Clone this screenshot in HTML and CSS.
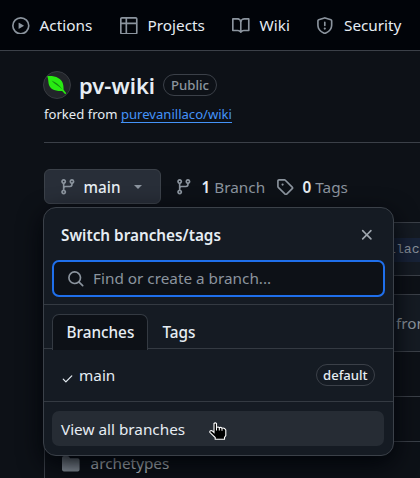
FILE: index.html
```html
<!DOCTYPE html>
<html lang="en">
<head>
<meta charset="utf-8">
<title>pv-wiki</title>
<link rel="stylesheet" href="styles.css">
</head>
<body>
<svg width="0" height="0" class="defs">
  <symbol id="branch" viewBox="0 0 16 16"><path d="M9.5 3.25a2.25 2.25 0 1 1 3 2.122V6A2.5 2.5 0 0 1 10 8.5H6a1 1 0 0 0-1 1v1.128a2.251 2.251 0 1 1-1.5 0V5.372a2.25 2.25 0 1 1 1.5 0v1.836A2.493 2.493 0 0 1 6 7h4a1 1 0 0 0 1-1v-.628A2.25 2.25 0 0 1 9.5 3.25Zm-6 0a.75.75 0 1 0 1.5 0 .75.75 0 0 0-1.5 0Zm8.25-.75a.75.75 0 1 0 0 1.5.75.75 0 0 0 0-1.5ZM4.25 12a.75.75 0 1 0 0 1.5.75.75 0 0 0 0-1.5Z"/></symbol>
</svg>
<nav class="nav">
  <a class="nav-item actions"><svg class="icon" viewBox="0 0 16 16"><path d="M8 0a8 8 0 1 1 0 16A8 8 0 0 1 8 0ZM1.5 8a6.500 6.500 0 1 0 13 0 6.500 6.500 0 0 0-13 0Zm4.879-2.773 4.264 2.559a.25.25 0 0 1 0 .428l-4.264 2.559A.25.25 0 0 1 6 10.559V5.442a.25.25 0 0 1 .379-.215Z"/></svg><span>Actions</span></a>
  <a class="nav-item projects"><svg class="icon" viewBox="0 0 16 16"><path d="M0 1.750C0 .784.784 0 1.750 0h12.500C15.216 0 16 .784 16 1.750v12.500A1.750 1.750 0 0 1 14.250 16H1.750A1.750 1.750 0 0 1 0 14.250ZM6.500 6.500v8h7.750a.25.25 0 0 0 .25-.25V6.500Zm8-1.500V1.750a.25.25 0 0 0-.25-.25H6.500V5Zm-13 1.500v7.750c0 .138.112.25.25.25H5v-8ZM5 5V1.500H1.750a.25.25 0 0 0-.25.25V5Z"/></svg><span>Projects</span></a>
  <a class="nav-item wiki"><svg class="icon" viewBox="0 0 16 16"><path d="M0 1.750A.75.75 0 0 1 .75 1h4.253c1.227 0 2.317.59 3 1.501A3.743 3.743 0 0 1 11.006 1h4.245a.75.75 0 0 1 .75.75v10.500a.75.75 0 0 1-.75.75h-4.507a2.250 2.250 0 0 0-1.591.659l-.622.621a.75.75 0 0 1-1.060 0l-.622-.621A2.250 2.250 0 0 0 5.258 13H.75a.75.75 0 0 1-.75-.75Zm7.251 10.324.004-5.073-.002-2.253A2.250 2.250 0 0 0 5.003 2.500H1.500v9h3.757a3.750 3.750 0 0 1 1.994.574ZM8.755 4.750l-.004 7.322a3.752 3.752 0 0 1 1.992-.572H14.500v-9h-3.495a2.250 2.250 0 0 0-2.250 2.250Z"/></svg><span>Wiki</span></a>
  <a class="nav-item security"><svg class="icon" viewBox="0 0 16 16"><path d="M7.467.133a1.748 1.748 0 0 1 1.066 0l5.250 1.680A1.750 1.750 0 0 1 15 3.480V7c0 1.566-.32 3.182-1.303 4.682-.983 1.498-2.585 2.813-5.032 3.855a1.697 1.697 0 0 1-1.330 0c-2.447-1.042-4.049-2.357-5.032-3.855C1.320 10.182 1 8.566 1 7V3.480a1.750 1.750 0 0 1 1.217-1.667Zm.61 1.429a.25.25 0 0 0-.153 0l-5.250 1.680a.25.25 0 0 0-.174.238V7c0 1.358.275 2.666 1.057 3.860.784 1.194 2.121 2.340 4.366 3.297a.196.196 0 0 0 .154 0c2.245-.956 3.582-2.104 4.366-3.298C13.225 9.666 13.500 8.360 13.500 7V3.480a.251.251 0 0 0-.174-.237ZM8.750 4.750v3a.75.75 0 0 1-1.500 0v-3a.75.75 0 0 1 1.500 0ZM9 10.500a1 1 0 1 1-2 0 1 1 0 0 1 2 0Z"/></svg><span>Security</span></a>
</nav>

<main class="page">
  <header class="repo">
    <div class="repo-title">
      <svg class="avatar" viewBox="0 0 28 28"><circle cx="14" cy="14" r="13.500" fill="#22252a" stroke="#373b41"/><path d="M4.200 5.200C8 4.900 12 5.200 15.500 7.200 19 9.300 20.800 12 20.600 18.700L23.300 22.300 22.200 23.300 19.200 20C11.500 20.300 6.500 18 5.600 12.500 5.200 9.800 5.300 7.500 4.200 5.200Z" fill="#28eb12"/><path d="M8.500 9.500c4.500 1.700 7.500 4.200 11 8.900C15.500 15 11.500 13 8.500 9.500Z" fill="#158d10"/></svg>
      <h1>pv-wiki</h1>
      <span class="label">Public</span>
    </div>
    <p class="fork">forked from <a>purevanillaco/wiki</a></p>
  </header>

  <div class="toolbar">
    <div class="branch-picker">
      <button class="branch-button"><svg class="icon" viewBox="0 0 16 16"><use href="#branch"/></svg><span>main</span><i class="caret"></i></button>
      <section class="popover">
        <div class="pop-head"><h2>Switch branches/tags</h2><svg class="close" viewBox="0 0 16 16"><path d="M3.720 3.720a.75.75 0 0 1 1.060 0L8 6.940l3.220-3.220a.75.75 0 0 1 1.060 1.060L9.060 8l3.220 3.220a.75.75 0 0 1-1.060 1.060L8 9.060l-3.220 3.220a.75.75 0 0 1-1.060-1.060L6.940 8 3.720 4.780a.75.75 0 0 1 0-1.060Z"/></svg></div>
        <div class="search"><svg class="icon" viewBox="0 0 16 16"><path d="M10.680 11.740a6 6 0 0 1-7.922-8.982 6 6 0 0 1 8.982 7.922l3.040 3.040a.749.749 0 0 1-1.060 1.060ZM11.500 7a4.500 4.500 0 1 0-9 0 4.500 4.500 0 0 0 9 0Z"/></svg><span>Find or create a branch...</span></div>
        <div class="tabs"><span class="tab selected"><b>Branches</b></span><span class="tab"><b>Tags</b></span></div>
        <div class="option"><svg class="check" viewBox="0 0 16 16"><path d="M13.780 4.220a.75.75 0 0 1 0 1.060l-7.250 7.250a.75.75 0 0 1-1.060 0L2.220 9.280a.75.75 0 0 1 1.060-1.060L6 10.940l6.720-6.720a.75.75 0 0 1 1.060 0Z"/></svg><span class="option-name">main</span><span class="label default">default</span></div>
        <div class="pop-foot"><a class="view-all"><span>View all branches</span></a></div>
        <svg class="pointer" viewBox="0 0 18 18"><path d="M5 1.500Q6.300.2 7.500 1.500V5.500Q9.300 4.500 10.300 5.700 12 4.800 13 6.200 15.500 5.500 16.800 8V13.500L15.500 15.500V17.300H6.200V15.500L.8 10.300Q.5 8.300 3 8.700L5 10.500Z" fill="#000" stroke="#fff" stroke-width="1.100"/><path d="M7.500 5.500V8.500M10.300 5.500V8.500M13 6.200V8.800" stroke="#fff" fill="none"/></svg>
      </section>
    </div>
    <span class="stat branches"><svg class="icon" viewBox="0 0 16 16"><use href="#branch"/></svg><span><b>1</b> Branch</span></span>
    <span class="stat tags"><svg class="icon" viewBox="0 0 16 16"><path d="M1 7.775V2.750C1 1.784 1.784 1 2.750 1h5.025c.464 0 .91.184 1.238.513l6.250 6.250a1.750 1.750 0 0 1 0 2.474l-5.026 5.026a1.750 1.750 0 0 1-2.474 0l-6.250-6.250A1.752 1.752 0 0 1 1 7.775Zm1.500 0c0 .066.026.13.073.177l6.250 6.250a.25.25 0 0 0 .354 0l5.025-5.025a.25.25 0 0 0 0-.354l-6.250-6.250a.25.25 0 0 0-.177-.073H2.750a.25.25 0 0 0-.25.25ZM6 5a1 1 0 1 1 0 2 1 1 0 0 1 0-2Z"/></svg><span><b>0</b> Tags</span></span>
  </div>

  <div class="notice"><code>llac</code></div>
  <div class="files">
    <div class="files-head">from</div>
    <div class="file"></div>
    <div class="file"></div>
    <div class="file folder"><svg class="icon" viewBox="0 0 16 16"><path d="M1.750 1A1.750 1.750 0 0 0 0 2.750v10.500C0 14.216.784 15 1.750 15h12.500A1.750 1.750 0 0 0 16 13.250v-8.500A1.750 1.750 0 0 0 14.250 3H7.500a.25.25 0 0 1-.2-.1l-.9-1.200C6.070 1.260 5.550 1 5 1H1.750Z"/></svg><span>archetypes</span></div>
  </div>
</main>
</body>
</html>
```
FILE: styles.css
```css
* { box-sizing: border-box; }
html, body { height: 100%; margin: 0; overflow: hidden; }
body { background: #0d1117; color: #e6edf3; font: 15.3px/22px "Noto Sans", sans-serif; display: flex; flex-direction: column; }
h1, h2, p { margin: 0; }
svg { display: block; flex: none; fill: currentColor; }
.defs { position: absolute; }
.icon { width: 17.6px; height: 17.6px; color: #8b949e; }

.nav { flex: none; height: 51px; display: flex; background: #010409; border-bottom: 1px solid #3b4048; padding-left: 12px; }
.nav-item { display: flex; align-items: center; gap: 10px; height: 51px; white-space: nowrap; }
.nav-item span { padding-bottom: 2px; }
.actions { width: 108px; }
.projects { width: 112px; }
.wiki { width: 84px; }
.security { gap: 10.4px; }

.page { flex: 1; padding-left: 44px; }
.repo { height: 92px; padding-top: 20px; border-bottom: 1px solid #3b4048; }
.repo-title { height: 28px; display: flex; align-items: center; }
.avatar { width: 28px; height: 28px; margin-left: -1px; }
h1 { font-size: 22px; line-height: 28px; font-weight: 600; margin-left: 8px; width: 84px; white-space: nowrap; }
.label { height: 22px; border: 1px solid #3b4048; border-radius: 11px; padding: 0 7px; font-size: 13.2px; line-height: 20px; font-weight: 500; color: #8b949e; }
.fork { margin-top: 5px; font-size: 13.1px; line-height: 20px; }
.fork a { color: #4493f8; text-decoration: underline; text-underline-offset: 3px; }

.toolbar { display: flex; height: 79px; padding-top: 26px; }
.branch-picker { position: relative; width: 117px; height: 35px; }
.branch-button { width: 117px; height: 35px; padding: 1px 0 0 14px; display: flex; align-items: center; background: #282e38; border: 1px solid #3b4149; border-radius: 6px; color: #e6edf3; font: 500 15.3px/22px "Noto Sans", sans-serif; }
.branch-button span { margin-left: 7px; width: 48px; text-align: left; padding-bottom: 1px; }
.caret { border: 4px solid transparent; border-top-color: #8b949e; border-bottom: 0; margin-left: 2px; }
.stat { display: flex; align-items: center; height: 35px; color: #8b949e; white-space: nowrap; }
.stat b { color: #e6edf3; font-weight: 600; }
.branches { margin-left: 14px; width: 101px; gap: 9px; }
.tags { gap: 9px; }

.notice { height: 54px; padding-top: 15px; border: 1px solid #3b4048; border-right: 0; background: #151b23; }
.notice code { display: block; margin-left: 294px; height: 24px; background: #182338; color: #8b949e; font: 13.2px/23px "Liberation Mono", monospace; padding-left: 49px; }
.files { margin-top: 18px; border-left: 1px solid #3b4048; border-top: 1px solid #3b4048; }
.files-head { height: 57px; padding-left: 351px; background: #151b23; border-bottom: 1px solid #3b4048; line-height: 56px; white-space: nowrap; overflow: hidden; color: #8b949e; }
.file { height: 45px; border-bottom: 1px solid #3b4048; display: flex; align-items: center; }
.folder { padding: 0 0 0 17px; gap: 11px; color: #c2c9d0; }
.folder span { padding-bottom: 2px; }

.popover { position: absolute; z-index: 2; left: -1px; top: 38px; width: 351px; height: 249px; background: #151b23; border: 1px solid #3b4149; border-radius: 13px; box-shadow: 0 8px 24px #010409; display: flex; flex-direction: column; }
.pop-head { height: 52px; display: flex; justify-content: space-between; align-items: center; padding: 2px 17px 0 17px; }
h2 { font-size: 15.3px; line-height: 22px; font-weight: 600; }
.close { width: 17.6px; height: 17.6px; color: #a0a7af; }
.search { flex: none; height: 37px; margin: 0 8px; padding: 1px 0 0 13px; display: flex; align-items: center; gap: 8.5px; background: #0d1117; border: 2px solid #1f6feb; border-radius: 7px; color: #8b949e; white-space: nowrap; }
.search span { padding-bottom: 2px; }
.tabs { flex: none; margin-top: 7px; height: 45px; padding: 9px 8px 0; border-top: 1px solid #343a42; border-bottom: 1px solid #343a42; display: flex; }
.tab { height: 35px; padding: 0 14.500px; line-height: 36px; }
.tab b { font-weight: 500; }
.selected { width: 96px; padding: 0 13.500px; line-height: 35px; background: #0d1117; border: 1px solid #343a42; border-bottom: 0; border-radius: 7px 7px 0 0; height: 36px; }
.option { flex: none; height: 52px; display: flex; align-items: center; padding: 0 18px 0 17px; }
.check { width: 13px; height: 13px; margin-top: 6px; }
.option-name { margin-left: 5px; flex: 1; }
.default { color: #e6edf3; font-size: 13.1px; padding: 0 6.400px; }
.pop-foot { flex: 1; border-top: 1px solid #343a42; padding: 9px 9px 9px 8px; }
.view-all { display: flex; align-items: center; height: 35px; padding: 0 0 0 9px; background: #262c34; border-radius: 7px; }
.pointer { position: absolute; left: 165px; top: 214px; width: 18px; height: 18px; }
```
